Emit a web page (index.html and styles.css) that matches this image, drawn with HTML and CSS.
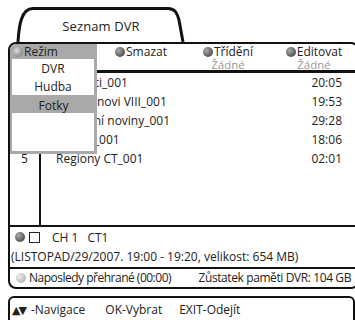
FILE: index.html
```html
<!DOCTYPE html>
<html lang="cs">
<head>
  <meta charset="UTF-8">
  <title>Seznam DVR</title>
  <link rel="stylesheet" href="styles.css">
</head>
<body>
  <div class="tab">
    <svg class="tab-edge" width="170" height="36" viewBox="0 0 170 36">
      <path d="M2 36 C3 20 5 2.5 17 2.5 H152 C159 2.5 161 7 163 14 L167 36" fill="none" stroke="#111" stroke-width="3"/>
    </svg>
    <span>Seznam DVR</span>
  </div>

  <div class="panel">
    <div class="head">
      <div class="col"></div>
      <div class="col"><span class="dot"></span>Smazat</div>
      <div class="col">
        <div><span class="dot"></span>Třídění</div>
        <div class="sub">Žádné</div>
      </div>
      <div class="col">
        <div><span class="dot"></span>Editovat</div>
        <div class="sub">Žádné</div>
      </div>
    </div>

    <div class="list">
      <div class="nums">
        <div>1</div><div>2</div><div>3</div><div>4</div><div>5</div>
      </div>
      <div class="entries">
        <div class="row"><span>Události_001</span><span>20:05</span></div>
        <div class="row"><span>Simpsonovi VIII_001</span><span>19:53</span></div>
        <div class="row"><span>Televizní noviny_001</span><span>29:28</span></div>
        <div class="row"><span>Zprávy_001</span><span>18:06</span></div>
        <div class="row"><span>Regiony CT_001</span><span>02:01</span></div>
      </div>
    </div>

    <div class="info">
      <div class="channel"><span class="dot"></span><span class="box"></span><span class="ch">CH 1</span><span>CT1</span></div>
      <div class="detail">(LISTOPAD/29/2007. 19:00 - 19:20, velikost: 654 MB)</div>
    </div>

    <div class="status">
      <div><span class="dot light"></span>Naposledy přehrané (00:00)</div>
      <div class="free">Zůstatek paměti DVR: 104 GB</div>
    </div>

    <div class="menu">
      <div class="menu-title"><span class="dot soft"></span>Režim</div>
      <div class="item">DVR</div>
      <div class="item">Hudba</div>
      <div class="item selected">Fotky</div>
      <div class="filler"></div>
    </div>
  </div>

  <div class="footer">
    <span class="arrows">▲▼</span>-Navigace <span class="key">OK-Vybrat</span><span class="key">EXIT-Odejít</span>
  </div>
</body>
</html>
```

FILE: styles.css
```css
body {
  margin: 0;
  background-color: #fff;
  color: #222;
  font-family: 'Open Sans', sans-serif;
  font-size: 12px;
  width: 355px;
  height: 320px;
  overflow: hidden;
}
.tab {
  position: relative;
  margin: 6px 0 0 16px;
  width: 170px;
  height: 36px;
  text-align: center;
  line-height: 40px;
  font-size: 13px;
}
.tab span {
  position: relative;
  letter-spacing: 0.1px;
}
.tab-edge {
  position: absolute;
  left: 0;
  top: 0;
}
.panel {
  position: relative;
  margin-left: 8px;
  width: 347px;
  border: 2px solid #111;
  border-radius: 8px;
}
.dot {
  display: inline-block;
  width: 10px;
  height: 10px;
  border-radius: 50%;
  background: radial-gradient(circle at 35% 35%, #aaa, #555 70%);
  vertical-align: -1px;
  margin-right: 1px;
}
.dot.soft {
  background: radial-gradient(circle at 35% 35%, #ddd, #888 75%);
}
.dot.light {
  background: radial-gradient(circle at 35% 35%, #eee, #b5b5b5 75%);
  margin-right: 3px;
}
.head {
  display: grid;
  grid-template-columns: 87px 88px 86px 1fr;
  height: 25px;
  padding-top: 1px;
  border-bottom: 3px solid #111;
  line-height: 14px;
  text-align: center;
}
.sub {
  color: #9a9a9a;
  font-size: 11.5px;
  line-height: 12px;
}
.list {
  display: grid;
  grid-template-columns: 31px 1fr;
  height: 152px;
  line-height: 19px;
  border-bottom: 2px solid #111;
}
.nums {
  border-right: 2px solid #111;
  text-align: center;
}
.entries {
  padding: 0 15px 0 15px;
}
.row {
  display: flex;
  justify-content: space-between;
}
.info {
  border-bottom: 2px solid #111;
}
.channel {
  display: flex;
  align-items: center;
  height: 20px;
  padding-left: 5px;
}
.box {
  width: 9px;
  height: 9px;
  border: 1px solid #222;
  margin: 0 12px 0 3px;
}
.ch {
  margin-right: 9px;
}
.detail {
  height: 20px;
  line-height: 19px;
  padding-left: 1px;
}
.status {
  display: flex;
  justify-content: space-between;
  height: 18px;
  line-height: 18px;
  padding-left: 6px;
  letter-spacing: -0.5px;
}
.free {
  letter-spacing: -0.4px;
  padding-right: 6px;
}
.menu {
  position: absolute;
  left: 0;
  top: 0;
  width: 87px;
  height: 110px;
  background-color: #a9a9a9;
  border-top-left-radius: 6px;
  text-align: center;
  display: flex;
  flex-direction: column;
  padding: 0 3px 3px 2px;
  box-sizing: border-box;
}
.menu-title {
  height: 15px;
  line-height: 16px;
  text-align: left;
  padding-left: 1px;
}
.item {
  background-color: #fff;
  height: 18px;
  line-height: 19px;
}
.item.selected {
  background-color: #a9a9a9;
  margin: 0 -3px 0 -2px;
  line-height: 21px;
}
.filler {
  background-color: #fff;
  flex: 1;
}
.footer {
  margin: 7px 0 0 8px;
  width: 347px;
  height: 30px;
  border: 2px solid #111;
  border-radius: 6px 6px 0 0;
  line-height: 24px;
  padding-left: 2px;
  box-sizing: border-box;
}
.arrows {
  font-family: 'DejaVu Sans', sans-serif;
  font-size: 11px;
  letter-spacing: -2px;
  margin-right: 6px;
}
.key {
  margin-left: 17px;
}
```
